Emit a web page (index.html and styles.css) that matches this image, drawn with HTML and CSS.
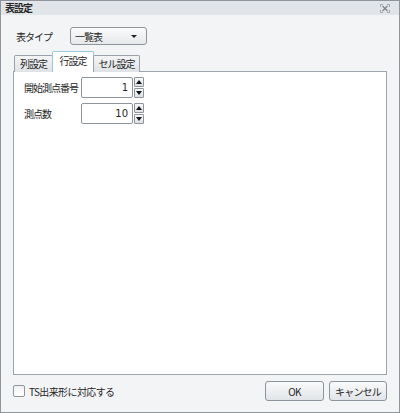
FILE: index.html
```html
<!DOCTYPE html>
<html lang="ja">

<head>
  <meta charset="UTF-8">
  <link rel="stylesheet" href="styles.css">
  <title>表設定</title>
</head>

<body>
  <div class="window">
    <div class="titlebar">
      <span class="title">表設定</span>
      <svg class="close-icon" width="10" height="9" viewBox="0 0 10 9">
        <path d="M0.5 3V0.5H3M7 0.5H9.5V3M9.5 6V8.5H7M3 8.5H0.5V6" fill="none" stroke="#a3a6aa" stroke-width="1"/>
        <path d="M2.5 2L7.5 7M7.5 2L2.5 7" stroke="#7e8286" stroke-width="1.2"/>
      </svg>
    </div>

    <div class="content">
      <!-- 表タイプ -->
      <div class="type-row">
        <span class="type-label">表タイプ</span>
        <div class="combo">
          <span>一覧表</span>
          <span class="combo-arrow"></span>
        </div>
      </div>

      <!-- タブ -->
      <div class="tabs">
        <div class="tab tab-col">列設定</div>
        <div class="tab tab-row active">行設定</div>
        <div class="tab tab-cell">セル設定</div>
      </div>

      <div class="panel">
        <div class="field-row">
          <span class="field-label">開始測点番号</span>
          <div class="spinner">
            <div class="spin-input">1</div>
            <div class="spin-buttons">
              <div class="spin-btn"><span class="tri-up"></span></div>
              <div class="spin-btn"><span class="tri-down"></span></div>
            </div>
          </div>
        </div>
        <div class="field-row">
          <span class="field-label">測点数</span>
          <div class="spinner">
            <div class="spin-input">10</div>
            <div class="spin-buttons">
              <div class="spin-btn"><span class="tri-up"></span></div>
              <div class="spin-btn"><span class="tri-down"></span></div>
            </div>
          </div>
        </div>
      </div>

      <!-- 下部 -->
      <div class="footer">
        <label class="check">
          <span class="check-box"></span>
          <span>TS出来形に対応する</span>
        </label>
        <div class="buttons">
          <button class="btn btn-ok">OK</button>
          <button class="btn btn-cancel">キャンセル</button>
        </div>
      </div>
    </div>
  </div>
</body>

</html>
```

FILE: styles.css
```css
body {
  margin: 0;
  font-family: "Noto Sans CJK JP", "Noto Sans", sans-serif;
  font-size: 10px;
  color: #262626;
}

.window {
  width: 400px;
  height: 413px;
  box-sizing: border-box;
  border: 1px solid #8e959c;
  background-color: #f3f4f6;
  display: flex;
  flex-direction: column;
}

.titlebar {
  height: 14px;
  background-color: #e1e4e8;
  display: flex;
  align-items: center;
  justify-content: space-between;
  padding: 0 9px 0 4px;
}

.title {
  font-weight: bold;
  letter-spacing: -1px;
  line-height: 14px;
}

.close-icon {
  display: block;
  margin-top: 1px;
}

.content {
  flex: 1;
  display: flex;
  flex-direction: column;
  padding: 12px 12px 11px 12px;
}

.type-row {
  display: flex;
  align-items: center;
  height: 18px;
}

.type-label {
  width: 54px;
  padding-left: 3px;
  letter-spacing: -1px;
}

.combo {
  width: 77px;
  height: 18px;
  box-sizing: border-box;
  border: 1px solid #8d949c;
  border-radius: 3px;
  background: linear-gradient(#fbfbfc, #e6e8eb);
  display: flex;
  align-items: center;
  justify-content: space-between;
  padding: 0 9px 0 4px;
  letter-spacing: -1px;
}

.combo-arrow {
  width: 0;
  height: 0;
  border-left: 3px solid transparent;
  border-right: 3px solid transparent;
  border-top: 3px solid #222;
}

.tabs {
  display: flex;
  align-items: flex-end;
  height: 20px;
  margin-top: 7px;
  padding-left: 1px;
  position: relative;
  z-index: 1;
  margin-bottom: -1px;
}

.tab {
  height: 17px;
  box-sizing: border-box;
  border: 1px solid #9aa1a8;
  border-bottom: none;
  border-radius: 2px 2px 0 0;
  background: linear-gradient(#f3f4f6, #dfe2e6);
  text-align: center;
  line-height: 16px;
  letter-spacing: -1px;
  margin-right: -1px;
}

.tab-col {
  width: 39px;
}

.tab-row {
  width: 42px;
}

.tab-cell {
  width: 47px;
}

.tab.active {
  height: 21px;
  background: #ffffff;
  border-color: #9cc7dc;
  line-height: 17px;
}

.panel {
  flex: 1;
  background-color: #ffffff;
  border: 1px solid #9ea5ad;
  padding: 5px 10px;
  display: flex;
  flex-direction: column;
  gap: 5px;
}

.field-row {
  display: flex;
  align-items: center;
}

.field-label {
  width: 57px;
  letter-spacing: -1px;
}

.spinner {
  display: flex;
  align-items: center;
}

.spin-input {
  width: 52px;
  height: 21px;
  box-sizing: border-box;
  border: 1px solid #8d949c;
  border-radius: 2px;
  background-color: #ffffff;
  text-align: right;
  padding-right: 4px;
  line-height: 19px;
  font-family: "DejaVu Sans", sans-serif;
  font-size: 10px;
}

.spin-buttons {
  display: flex;
  flex-direction: column;
  margin-left: 1px;
  gap: 1px;
}

.spin-btn {
  width: 10px;
  height: 10px;
  box-sizing: border-box;
  border: 1px solid #8d949c;
  border-radius: 1px;
  background: linear-gradient(#f8f9fa, #dde0e4);
  display: flex;
  align-items: center;
  justify-content: center;
}

.tri-up {
  width: 0;
  height: 0;
  border-left: 3px solid transparent;
  border-right: 3px solid transparent;
  border-bottom: 4px solid #111;
}

.tri-down {
  width: 0;
  height: 0;
  border-left: 3px solid transparent;
  border-right: 3px solid transparent;
  border-top: 4px solid #111;
}

.footer {
  display: flex;
  align-items: center;
  justify-content: space-between;
  margin-top: 6px;
  height: 20px;
}

.check {
  display: flex;
  align-items: center;
  gap: 4px;
  letter-spacing: -0.6px;
}

.check-box {
  width: 12px;
  height: 12px;
  box-sizing: border-box;
  border: 1px solid #8d949c;
  border-radius: 2px;
  background: linear-gradient(#f1f2f4, #ffffff);
}

.buttons {
  display: flex;
  gap: 5px;
}

.btn {
  height: 20px;
  box-sizing: border-box;
  border: 1px solid #8d949c;
  border-radius: 3px;
  background: linear-gradient(#f9fafb, #e1e4e8);
  font-family: "Noto Sans CJK JP", "Noto Sans", sans-serif;
  font-size: 10px;
  color: #262626;
  padding: 0;
  letter-spacing: -0.8px;
}

.btn-ok {
  width: 59px;
}

.btn-cancel {
  width: 58px;
}
```
